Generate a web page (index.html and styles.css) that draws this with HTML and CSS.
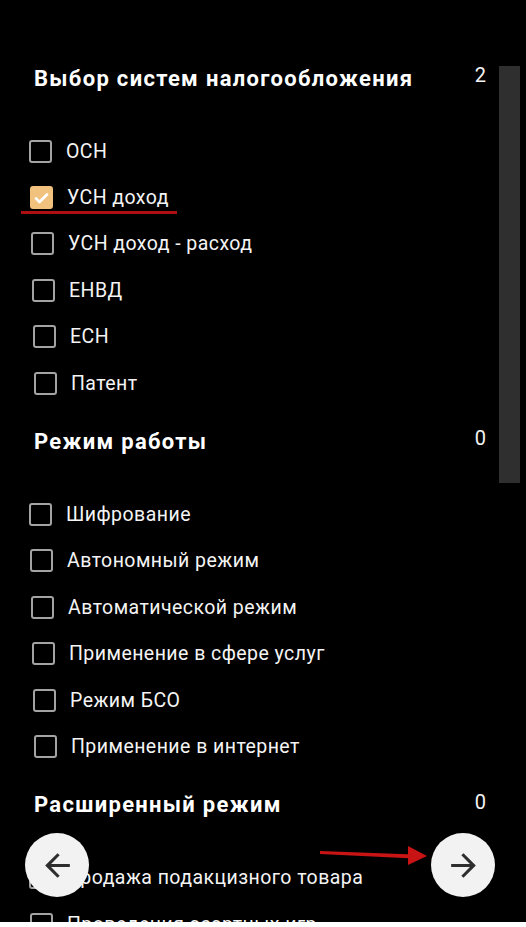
FILE: index.html
```html
<!DOCTYPE html>
<html lang="ru">
<head>
  <meta charset="UTF-8" />
  <title>Настройки ККТ</title>
  <link rel="stylesheet" href="styles.css">
</head>
<body>

  <div class="screen">

    <div class="scrollbar"></div>

    <!-- Налогообложение -->
    <div class="section">
      <div class="section-head">
        <h2>Выбор систем налогообложения</h2>
        <span class="count">2</span>
      </div>
      <div class="options">
        <div class="option"><span class="box"></span>ОСН</div>
        <div class="option marked">
          <span class="box checked">
            <svg viewBox="0 0 24 24"><path d="M5 12.5l4.5 4.5L19 7.5" /></svg>
          </span>УСН доход
        </div>
        <div class="option"><span class="box"></span>УСН доход - расход</div>
        <div class="option"><span class="box"></span>ЕНВД</div>
        <div class="option"><span class="box"></span>ЕСН</div>
        <div class="option"><span class="box"></span>Патент</div>
      </div>
    </div>

    <!-- Режим работы -->
    <div class="section">
      <div class="section-head">
        <h2>Режим работы</h2>
        <span class="count">0</span>
      </div>
      <div class="options">
        <div class="option"><span class="box"></span>Шифрование</div>
        <div class="option"><span class="box"></span>Автономный режим</div>
        <div class="option"><span class="box"></span>Автоматической режим</div>
        <div class="option"><span class="box"></span>Применение в сфере услуг</div>
        <div class="option"><span class="box"></span>Режим БСО</div>
        <div class="option"><span class="box"></span>Применение в интернет</div>
      </div>
    </div>

    <!-- Расширенный режим -->
    <div class="section">
      <div class="section-head">
        <h2>Расширенный режим</h2>
        <span class="count">0</span>
      </div>
      <div class="options">
        <div class="option"><span class="box"></span>Продажа подакцизного товара</div>
        <div class="option"><span class="box"></span>Проведения азартных игр</div>
      </div>
    </div>

    <!-- Навигация -->
    <button class="fab fab-back">
      <svg viewBox="0 0 24 24"><path d="M20 11H7.83l5.59-5.59L12 4l-8 8 8 8 1.41-1.41L7.83 13H20v-2z" /></svg>
    </button>
    <button class="fab fab-next">
      <svg viewBox="0 0 24 24"><path d="M12 4l-1.41 1.41L16.17 11H4v2h12.17l-5.58 5.59L12 20l8-8z" /></svg>
    </button>

    <svg class="hint-arrow" viewBox="0 0 120 24">
      <path d="M2 5 L96 8.5 L96 12.5 L2 8 Z" />
      <path d="M90 0 L109 10 L90 19 Z" />
    </svg>

  </div>

</body>
</html>
```

FILE: styles.css
```css
body {
  margin: 0;
  background-color: #fff;
  font-family: Roboto, "Noto Sans", Arial, sans-serif;
  color: #f4f4f4;
}
.screen {
  position: relative;
  width: 526px;
  height: 922px;
  overflow: hidden;
  background-color: #000;
  padding-top: 55px;
  box-sizing: border-box;
}
.scrollbar {
  position: absolute;
  left: 499px;
  top: 66px;
  width: 21px;
  height: 417px;
  background-color: #2f2f2f;
}
.section {
  margin-bottom: 12px;
}
.section-head {
  display: flex;
  justify-content: space-between;
  align-items: center;
  height: 46px;
  padding: 0 40px 0 34px;
}
h2 {
  margin: 0;
  font-size: 22px;
  font-weight: bold;
  letter-spacing: 1.3px;
  color: #fff;
}
.count {
  font-size: 20px;
  margin-top: -6px;
}
.options {
  margin-top: 27px;
}
.option {
  position: relative;
  display: flex;
  align-items: center;
  gap: 14px;
  height: 46.4px;
  padding-left: 29px;
  font-size: 19.5px;
  letter-spacing: 0.45px;
}
.option:nth-child(2) { padding-left: 30px; }
.option:nth-child(3) { padding-left: 31px; }
.option:nth-child(4) { padding-left: 32px; }
.option:nth-child(5) { padding-left: 33px; }
.option:nth-child(6) { padding-left: 34px; }
.box {
  width: 19px;
  height: 19px;
  border: 2.5px solid #a3a3a3;
  border-radius: 3px;
  flex-shrink: 0;
}
.box.checked {
  border-color: #f0c27d;
  background-color: #f0c27d;
  display: flex;
  align-items: center;
  justify-content: center;
}
.box.checked svg {
  width: 24px;
  height: 24px;
  fill: none;
  stroke: #fff;
  stroke-width: 3.4;
  stroke-linecap: round;
  stroke-linejoin: round;
}
.marked::after {
  content: "";
  position: absolute;
  left: 21px;
  top: 37px;
  width: 156px;
  height: 2.5px;
  background-color: #ad0f12;
}
.fab {
  position: absolute;
  top: 833px;
  width: 64px;
  height: 64px;
  border: none;
  border-radius: 50%;
  background-color: #f2f2f2;
  display: flex;
  align-items: center;
  justify-content: center;
  padding: 0;
}
.fab svg {
  width: 37px;
  height: 37px;
  fill: #2e2e2e;
}
.fab-back {
  left: 25px;
}
.fab-next {
  left: 431px;
}
.hint-arrow {
  position: absolute;
  left: 318px;
  top: 846px;
  width: 120px;
  height: 24px;
  fill: #c81414;
}
```
